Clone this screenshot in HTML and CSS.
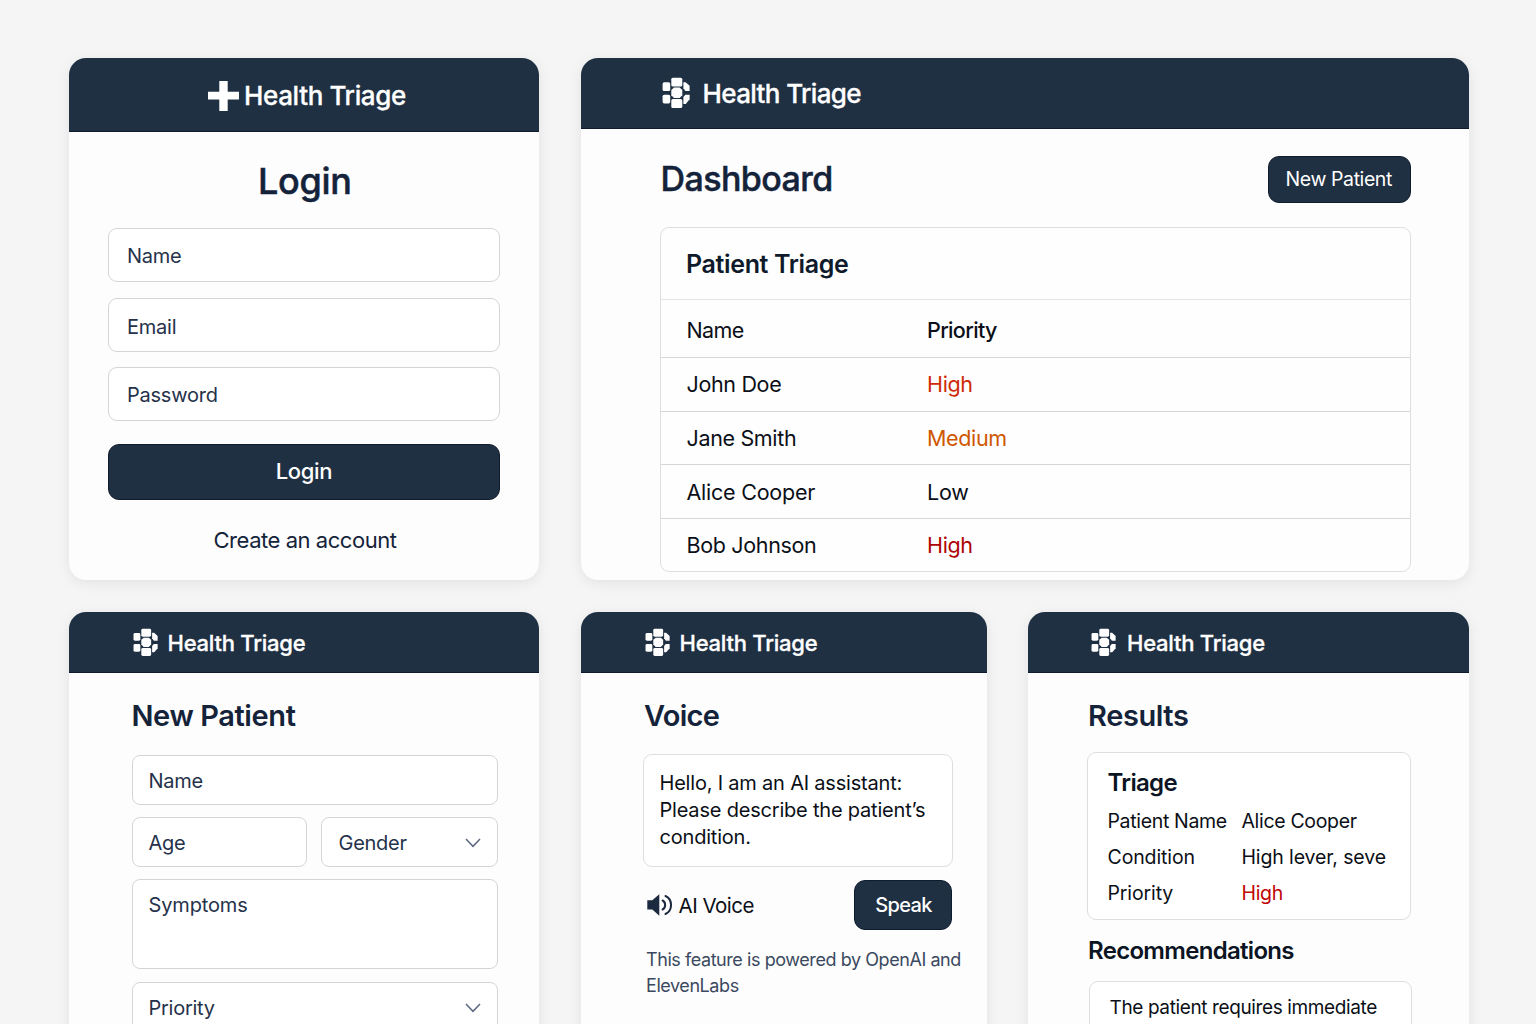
FILE: index.html
```html
<!DOCTYPE html>
<html lang="en">
<head>
<meta charset="utf-8">
<title>Health Triage</title>
<link rel="stylesheet" href="styles.css">
</head>
<body>
<svg width="0" height="0" class="defs" aria-hidden="true">
  <symbol id="logo" viewBox="0 0 28 32">
    <rect x="0.600" y="5.300" width="7.600" height="8.700" rx="1.600"/>
    <rect x="0.600" y="17.700" width="7.600" height="8.700" rx="1.600"/>
    <rect x="9.300" y="0.700" width="11" height="8.800" rx="1.600"/>
    <path d="M12 10.600h5.700l2.600 2.400v5.200l-2.600 2.700h-5.700l-2.700-2.700v-5.200z"/>
    <rect x="9.300" y="22.100" width="11" height="9" rx="1.600"/>
    <path d="M21.400 5.200h2.200l4 3.600v5.200h-4.200l-2-2.700z"/>
    <path d="M23.300 17.700h4.300v4.600l-3.800 4.600h-2.400v-6.900z"/>
  </symbol>
</svg>
<main class="page">
  <div class="row row-top">
    <section class="card card-login">
      <header class="bar bar-center">
        <svg class="plus" viewBox="0 0 31 30"><path d="M11.300 0h8.400v10.800H31v7.800H19.700V30h-8.400V18.600H0v-7.800h11.300z"/></svg>
        <span class="brand">Health Triage</span>
      </header>
      <div class="login-body">
        <h1 class="login-title">Login</h1>
        <div class="field">Name</div>
        <div class="field">Email</div>
        <div class="field password">Password</div>
        <button class="btn btn-login">Login</button>
        <a class="create">Create an account</a>
      </div>
    </section>
    <section class="card card-dash">
      <header class="bar bar-dash">
        <svg class="logo"><use href="#logo"/></svg>
        <span class="brand">Health Triage</span>
      </header>
      <div class="dash-body">
        <div class="dash-head">
          <h1 class="dash-title">Dashboard</h1>
          <button class="btn btn-new">New Patient</button>
        </div>
        <div class="table">
          <h2 class="table-title">Patient Triage</h2>
          <div class="tr th"><span>Name</span><span class="medium">Priority</span></div>
          <div class="tr"><span>John Doe</span><span class="high">High</span></div>
          <div class="tr"><span>Jane Smith</span><span class="med">Medium</span></div>
          <div class="tr low"><span>Alice Cooper</span><span>Low</span></div>
          <div class="tr"><span>Bob Johnson</span><span class="crit">High</span></div>
        </div>
      </div>
    </section>
  </div>
  <div class="row row-bottom">
    <section class="card card-new">
      <header class="bar bar-small">
        <svg class="logo"><use href="#logo"/></svg>
        <span class="brand">Health Triage</span>
      </header>
      <div class="new-body">
        <h2 class="title">New Patient</h2>
        <div class="input">Name</div>
        <div class="pair">
          <div class="input">Age</div>
          <div class="input select">Gender<svg class="chev" viewBox="0 0 16 10"><path d="M1 1l7 7.300L15 1"/></svg></div>
        </div>
        <div class="input area">Symptoms</div>
        <div class="input">Priority<svg class="chev" viewBox="0 0 16 10"><path d="M1 1l7 7.300L15 1"/></svg></div>
      </div>
    </section>
    <section class="card card-voice">
      <header class="bar bar-small">
        <svg class="logo"><use href="#logo"/></svg>
        <span class="brand">Health Triage</span>
      </header>
      <div class="voice-body">
        <h2 class="title">Voice</h2>
        <p class="bubble">Hello, I am an AI assistant:<br>Please describe the patient’s<br>condition.</p>
        <div class="voice-row">
          <svg class="speaker" viewBox="0 0 26 22"><path class="solid" d="M.3 6.300h5L12.300.3v21.400L5.300 15.500h-5z"/><path d="M15.600 6.500c3.400 1.700 3.400 7.300 0 9M18.500 2c7.400 3.400 7.400 14.600 0 18"/></svg>
          <span class="voice-label">AI Voice</span>
          <button class="btn btn-speak">Speak</button>
        </div>
        <p class="note">This feature is powered by OpenAI and<br>ElevenLabs</p>
      </div>
    </section>
    <section class="card card-results">
      <header class="bar bar-small">
        <svg class="logo"><use href="#logo"/></svg>
        <span class="brand">Health Triage</span>
      </header>
      <div class="results-body">
        <h2 class="title">Results</h2>
        <div class="summary">
          <h3 class="sub">Triage</h3>
          <dl class="facts">
            <dt>Patient Name</dt><dd>Alice Cooper</dd>
            <dt class="wide">Condition</dt><dd class="wide">High lever, seve</dd>
            <dt class="wide">Priority</dt><dd class="alert">High</dd>
          </dl>
        </div>
        <h3 class="sub rec">Recommendations</h3>
        <div class="advice">The patient requires immediate</div>
      </div>
    </section>
  </div>
</main>
</body>
</html>
```
FILE: styles.css
```css
* { box-sizing: border-box; margin: 0; padding: 0; }
html, body { height: 1024px; overflow: hidden; }
body {
  background: #f5f5f5;
  font-family: Inter, "Liberation Sans", sans-serif;
  color: #0b0f17;
  font-size: 20px;
  letter-spacing: -0.01em;
}
.defs { display: block; }
.page { padding: 58px 67.500px 0 68.500px; display: flex; flex-direction: column; gap: 32px; }
.row { display: flex; }
.row-top { height: 522px; gap: 41.500px; }
.row-bottom { height: 440px; gap: 41px; }
.card {
  background: #fdfdfd;
  border-radius: 17px;
  overflow: hidden;
  box-shadow: 0 3px 14px rgba(0, 0, 0, 0.08);
}
.card-login { width: 470.500px; }
.card-new { width: 470.500px; margin-right: 0.500px; }
.card-dash { width: 888px; }
.card-voice { width: 406px; }
.card-results { width: 441px; }
.row-bottom .card { border-radius: 17px 17px 0 0; }

.bar { background: #203043; color: #fff; display: flex; align-items: center; border-bottom: 1px solid #0e1c2e; }
.brand { font-weight: 500; -webkit-text-stroke: 0.300px currentColor; white-space: nowrap; }
.logo { fill: #fff; flex: none; }
.bar-center { height: 74px; padding-left: 139.500px; padding-top: 2px; }
.bar-center .brand { font-size: 26px; letter-spacing: -0.014em; margin-left: 5px; }
.plus { width: 31px; height: 30px; fill: #fff; }
.bar-dash { height: 71px; padding-left: 81.500px; }
.bar-dash .logo { width: 28px; height: 32px; }
.bar-dash .brand { font-size: 26px; letter-spacing: -0.024em; margin-left: 12.500px; padding-top: 1px; }
.bar-small { height: 61px; padding-left: 64px; padding-top: 1px; }
.bar-small .logo { width: 25px; height: 29px; }
.bar-small .brand { font-size: 22px; letter-spacing: -0.011em; margin-left: 10px; padding-top: 1px; }
.card-results .bar-small { padding-left: 63px; }
.card-results .bar-small .brand { margin-left: 11.500px; }

.btn {
  font-family: inherit; font-weight: 500; color: #fff; background: #203043;
  border: 1px solid #0e1c2e; border-radius: 11px; letter-spacing: inherit;
}

.login-body { padding: 24px 39px 0 39.500px; display: flex; flex-direction: column; }
.login-title { font-size: 36px; line-height: 50px; font-weight: 500; -webkit-text-stroke: 0.500px currentColor; text-align: center; color: #14233a; letter-spacing: -0.009em; padding-left: 1.500px; margin-bottom: 22px; }
.field {
  height: 54px; border: 1px solid #d3d5d9; border-radius: 9px; background: #fff;
  margin: 0 0 16px; padding: 2px 18px 0; display: flex; align-items: center;
  font-size: 20px; color: #25324a; letter-spacing: -0.012em;
}
.field + .field { padding-top: 3px; margin-bottom: 15px; }
.field.password { padding-top: 1px; }
.btn-login { height: 56px; margin-top: 8px; font-size: 22px; padding-bottom: 2px; letter-spacing: -0.014em; }
.create { font-size: 22px; line-height: 30px; margin-top: 25px; padding-left: 2px; text-align: center; color: #14233a; letter-spacing: -0.021em; }

.dash-body { padding: 27px 57.500px 0 79.500px; }
.dash-head { display: flex; justify-content: space-between; height: 71px; }
.dash-title { font-size: 34px; line-height: 45px; font-weight: 500; -webkit-text-stroke: 0.500px currentColor; color: #14233a; letter-spacing: -0.017em; padding-left: 0.500px; }
.btn-new { width: 143px; height: 47px; font-size: 19.500px; font-weight: 430; padding: 0 1.500px 2px 0; letter-spacing: -0.021em; }
.table { height: 345px; border: 1px solid #dcdee1; border-radius: 9px; background: #fefefe; }
.table-title { height: 72px; line-height: 72px; padding-left: 25px; font-size: 25px; font-weight: 570; color: #0f1a2b; letter-spacing: -0.014em; border-bottom: 1px solid #e3e4e6; }
.tr { display: grid; grid-template-columns: 240.500px 1fr; height: 53.600px; line-height: 52.500px; padding-left: 25.500px; border-bottom: 1px solid #d5d7da; font-size: 21.500px; letter-spacing: -0.016em; }
.tr:last-child { border-bottom: 0; }
.low { line-height: 54px; letter-spacing: -0.011em; }
.th { height: 58px; line-height: 61px; letter-spacing: -0.03em; }
.medium { font-weight: 480; }
.high { color: #cf2a05; }
.med { color: #d05600; }
.crit { color: #ae0404; }

.title { font-size: 29px; line-height: 40px; font-weight: 580; color: #14233a; letter-spacing: -0.014em; }
.new-body { padding: 23px 41.500px 0 63px; display: flex; flex-direction: column; gap: 12px; }
.new-body .title { margin-bottom: 7px; }
.input {
  height: 50px; flex: none; border: 1px solid #d3d5d9; border-radius: 8px; background: #fff;
  padding: 1px 16px 0; display: flex; align-items: center; justify-content: space-between; color: #25324a;
  letter-spacing: -0.013em;
}
.pair { display: grid; grid-template-columns: 175.500px 1fr; gap: 13.500px; }
.select { padding-left: 17px; }
.area { height: 90px; align-items: flex-start; padding-top: 13px; letter-spacing: -0.007em; }
.area + .input { height: 52px; margin-top: 0.500px; padding-top: 0; }
.chev { width: 16px; height: 10px; fill: none; stroke: #5c6980; stroke-width: 1.500; }

.voice-body { padding: 23px 0 0 62.500px; }
.voice-body .title { padding-left: 1px; letter-spacing: -0.024em; }
.bubble { width: 309.500px; height: 112.500px; margin-top: 18px; padding: 15px 15.500px; border: 1px solid #dcdee1; border-radius: 9px; background: #fff; line-height: 27px; white-space: nowrap; }
.voice-row { display: flex; align-items: center; width: 309px; height: 50px; margin-top: 13.500px; padding-left: 3.500px; }
.speaker { width: 26px; height: 22px; fill: none; stroke: #1b2a3e; stroke-width: 2; stroke-linecap: round; }
.speaker .solid { fill: #1b2a3e; stroke: none; }
.voice-label { font-size: 20.500px; letter-spacing: -0.025em; margin-left: 6px; padding-top: 1px; }
.btn-speak { width: 98px; height: 50px; margin-left: auto; font-size: 20px; font-weight: 480; letter-spacing: -0.035em; padding-left: 1px; }
.note { margin: 17px 0 0 3px; font-size: 18px; line-height: 26px; color: #3b4960; letter-spacing: -0.024em; white-space: nowrap; }

.results-body { padding: 23px 58px 0 59.500px; }
.results-body .title { padding-left: 1px; }
.summary { height: 168px; margin-top: 16px; padding: 14px 0 0 19.500px; border: 1px solid #dcdee1; border-radius: 9px; background: #fff; }
.sub { font-size: 24px; line-height: 32px; font-weight: 570; color: #0b1422; letter-spacing: -0.028em; }
.facts { display: grid; grid-template-columns: 134px 1fr; font-size: 19.500px; line-height: 36px; margin-top: 4px; letter-spacing: -0.017em; white-space: nowrap; }
.wide { letter-spacing: -0.006em; }
.alert { color: #c00505; }
.rec { margin-top: 15px; padding-left: 1px; letter-spacing: -0.029em; }
.advice { height: 70px; margin: 14px -1px 0 1.500px; padding: 12px 20px; font-size: 19px; line-height: 28px; letter-spacing: -0.020em; border: 1px solid #dcdee1; border-radius: 9px; background: #fff; white-space: nowrap; }
```
